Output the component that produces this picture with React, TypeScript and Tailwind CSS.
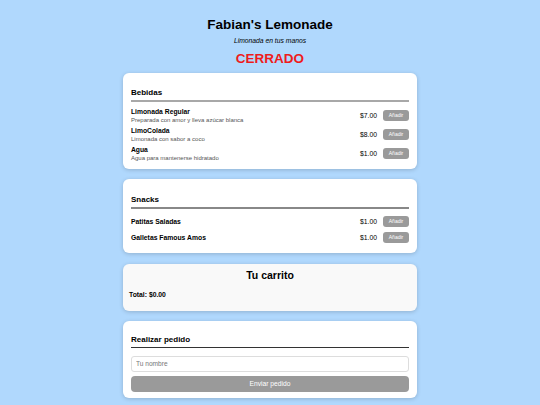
const bebidas = [
  { name: "Limonada Regular", desc: "Preparada con amor y lleva azúcar blanca", price: "$7.00" },
  { name: "LimoColada", desc: "Limonada con sabor a coco", price: "$8.00" },
  { name: "Agua", desc: "Agua para mantenerse hidratado", price: "$1.00" },
]

const snacks = [
  { name: "Patitas Saladas", price: "$1.00" },
  { name: "Galletas Famous Amos", price: "$1.00" },
]

function AddButton() {
  return (
    <button className="h-[11px] w-[26px] rounded-[3px] bg-[#9a9a9a] text-[5px] leading-[11px] text-white">
      Añadir
    </button>
  )
}

function Card({ children, className = "" }: { children: React.ReactNode; className?: string }) {
  return (
    <section className={`rounded-[6px] px-2 shadow-[0_1px_4px_rgba(0,0,0,0.18)] ${className}`}>
      {children}
    </section>
  )
}

export default function App() {
  return (
    <div className="min-h-screen bg-[#b0d8fd] pt-[17px] pb-4 font-['Liberation_Sans',Arial,sans-serif] text-black">
      <h1 className="text-center text-[13.5px] font-bold leading-[16px]">Fabian's Lemonade</h1>
      <p className="mt-[4px] text-center text-[6.75px] italic leading-[8px]">Limonada en tus manos</p>
      <p className="mt-[6px] text-center text-[13.5px] font-bold leading-[16px] text-[#ee1c1c]">CERRADO</p>

      <div className="mx-auto mt-[6px] flex w-[294px] flex-col">
        <Card className="bg-white pt-[14px] pb-[7px]">
          <h2 className="border-b-2 border-[#a8a8a8] pb-[1px] text-[8px] font-bold leading-[12px]">Bebidas</h2>
          <ul className="mt-[5px] flex flex-col gap-[2px]">
            {bebidas.map((b) => (
              <li key={b.name} className="flex items-center">
                <div className="flex-1">
                  <div className="text-[6.75px] font-bold leading-[9px]">{b.name}</div>
                  <div className="text-[6px] leading-[8px] text-[#555]">{b.desc}</div>
                </div>
                <span className="mr-[6px] text-[6.8px] leading-[10px]">{b.price}</span>
                <AddButton />
              </li>
            ))}
          </ul>
        </Card>

        <Card className="mt-[10px] bg-white pt-[15px] pb-[10px]">
          <h2 className="border-b-2 border-[#888] pb-[1px] text-[8px] font-bold leading-[12px]">Snacks</h2>
          <ul className="mt-[7px] flex flex-col gap-[5px]">
            {snacks.map((s) => (
              <li key={s.name} className="flex items-center">
                <div className="flex-1 text-[6.8px] font-bold leading-[10px]">{s.name}</div>
                <span className="mr-[6px] text-[6.8px] leading-[10px]">{s.price}</span>
                <AddButton />
              </li>
            ))}
          </ul>
        </Card>

        <Card className="mt-[11px] bg-[#f9f9f9] pt-[4px] pb-[12px]">
          <h2 className="text-center text-[10.5px] font-bold leading-[14px]">Tu carrito</h2>
          <p className="mt-[7.5px] -ml-[2px] text-[6.8px] font-bold leading-[9px]">Total: $0.00</p>
        </Card>

        <Card className="mt-[10px] bg-white pt-[13px] pb-[6px]">
          <h2 className="border-b-[1.5px] border-[#333] pb-[1px] text-[8px] font-bold leading-[12px]">Realizar pedido</h2>
          <input
            className="mt-[8px] block h-[16px] w-full rounded-[3px] border border-[#ddd] bg-white px-[4px] text-[6.6px] outline-none placeholder:text-[#777]"
            placeholder="Tu nombre"
          />
          <button className="mt-[4px] block h-[16px] w-full rounded-[4px] bg-[#9a9a9a] text-[6.7px] leading-[16px] text-white">
            Enviar pedido
          </button>
        </Card>
      </div>
    </div>
  )
}
